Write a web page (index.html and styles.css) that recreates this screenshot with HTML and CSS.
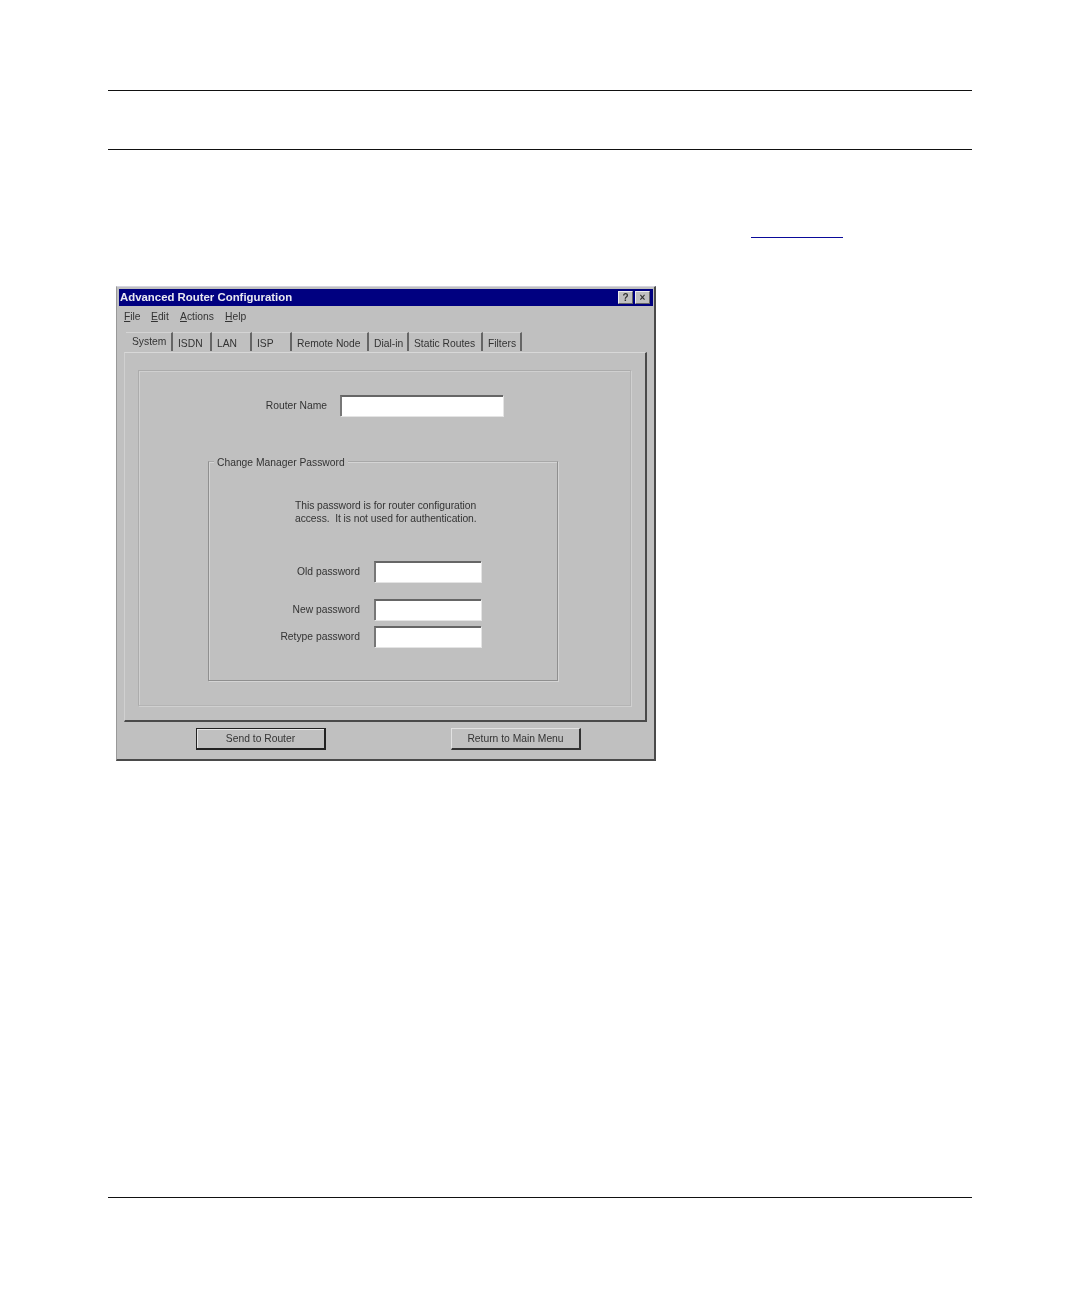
FILE: index.html
```html
<!DOCTYPE html>
<html lang="en">
<head>
<meta charset="utf-8">
<title>Advanced Router Configuration</title>
<link rel="stylesheet" href="styles.css">
</head>
<body>
<main class="page">
  <hr class="rule rule-top">
  <hr class="rule rule-second">
  <div class="link-line"><a class="link-mark" href="#"></a></div>
  <section class="dialog">
    <header class="titlebar">
      <span class="title">Advanced Router Configuration</span>
      <span class="winbtn winbtn-help">?</span>
      <span class="winbtn winbtn-close">×</span>
    </header>
    <nav class="menu">
      <span class="menu-item menu-file"><u>F</u>ile</span>
      <span class="menu-item menu-edit"><u>E</u>dit</span>
      <span class="menu-item menu-actions"><u>A</u>ctions</span>
      <span class="menu-item"><u>H</u>elp</span>
    </nav>
    <div class="tabs">
      <span class="tab tab-active">System</span>
      <span class="tab">ISDN</span>
      <span class="tab">LAN</span>
      <span class="tab">ISP</span>
      <span class="tab">Remote Node</span>
      <span class="tab">Dial-in</span>
      <span class="tab">Static Routes</span>
      <span class="tab">Filters</span>
    </div>
    <div class="panel">
      <div class="inner">
        <div class="router-row">
          <label class="router-label">Router Name</label>
          <span class="field field-router"></span>
        </div>
        <div class="group">
          <span class="legend">Change Manager Password</span>
          <p class="note">This password is for router configuration<br>access.&nbsp; It is not used for authentication.</p>
          <div class="pw-row pw-old"><label class="pw-label">Old password</label><span class="field field-pw"></span></div>
          <div class="pw-row pw-new"><label class="pw-label">New password</label><span class="field field-pw"></span></div>
          <div class="pw-row pw-retype"><label class="pw-label">Retype password</label><span class="field field-pw"></span></div>
        </div>
      </div>
    </div>
    <footer class="actions">
      <button class="btn btn-default">Send to Router</button>
      <button class="btn btn-plain">Return to Main Menu</button>
    </footer>
  </section>
  <hr class="rule rule-bottom">
</main>
</body>
</html>
```
FILE: styles.css
```css
* { box-sizing: border-box; }
html, body { margin: 0; padding: 0; background: #fff; }
.page { width: 1080px; height: 1298px; padding: 90px 108px 0; overflow: hidden; }
.rule { display: block; margin: 0; border: 0; height: 1px; background: #111; }
.rule-second { margin-top: 58px; }
.rule-bottom { margin-top: 436px; }
.link-line { height: 88px; padding: 87px 0 0 643px; }
.link-mark { display: block; width: 92px; height: 1px; background: #0a0a9a; }

.dialog {
  width: 540px; height: 475px; margin: 48px 0 0 8px; padding: 2px 0 0 2px;
  background: #c0c0c0; color: #2a2a2a;
  border-top: 1px solid #d4d4e0; border-left: 1px solid #999;
  border-right: 2px solid #4a4a4a; border-bottom: 2px solid #4a4a4a;
  font: 10.3px/13px "Liberation Sans", Arial, sans-serif;
  filter: blur(0.7px);
}
.titlebar {
  height: 17px; margin-right: 1px; display: flex; align-items: center; gap: 2px;
  padding: 0 3px 0 1px; background: #000080;
}
.title { flex: 1; color: #e8e8f0; font-weight: bold; font-size: 11.4px; }
.winbtn {
  width: 15px; height: 13px; background: #c0c0c0; color: #333;
  border: 1px solid; border-color: #eee #666 #666 #eee;
  font: bold 10px/11px "Liberation Sans", Arial, sans-serif; text-align: center;
}
.menu { height: 20px; display: flex; align-items: center; padding-left: 5px; }
.menu-item { color: #333; }
.menu-file { width: 27px; }
.menu-edit { width: 29px; }
.menu-actions { width: 45px; }

.tabs {
  height: 20px; margin: 6px 0 0 7px;
  display: grid; grid-template-columns: 47px 39px 40px 40px 77px 40px 74px 39px; width: 396px;
}
.tab {
  padding: 4px 0 0 5px; color: #333; white-space: nowrap;
  border-right: 2px solid #666; margin-bottom: 1px;
  border-top: 1px solid #d4d4d4;
}
.tab-active { padding-top: 2px; padding-left: 6px; }

.panel {
  width: 523px; height: 370px; margin-left: 5px; padding: 17px 14px 0 13px;
  border-top: 1px solid #d8d8d8; border-left: 1px solid #d0d0d0;
  border-right: 2px solid #4a4a4a; border-bottom: 2px solid #4a4a4a;
}
.inner {
  height: 336px; padding-top: 24px;
  border: 1px solid #acacac; border-right-color: #b4b4b4; border-bottom-color: #b4b4b4;
  box-shadow: 1px 1px 0 #d0d0d0, inset 1px 1px 0 #d0d0d0;
}
.router-row { display: flex; align-items: center; height: 21px; gap: 13px; }
.router-label { width: 188px; text-align: right; color: #333; }
.field {
  display: block; height: 21px; background: #fff;
  border-top: 2px solid #666; border-left: 2px solid #777;
  box-shadow: 1px 1px 0 #e4e4e4;
}
.field-router { width: 163px; }
.group {
  position: relative; width: 350px; height: 220px; margin: 45px 0 0 69px;
  border: 1px solid #8f8f8f; border-top-color: #a8a8a8;
  box-shadow: 1px 1px 0 #d4d4d4, inset 1px 1px 0 #d4d4d4;
}
.legend {
  position: absolute; left: 5px; top: -6px; padding: 0 3px; background: #c0c0c0;
  color: #333; white-space: nowrap;
}
.note { margin: 37px 0 0 86px; color: #333; letter-spacing: -0.05px; white-space: nowrap; }
.pw-row { display: flex; align-items: center; height: 21px; gap: 14px; }
.pw-old { margin-top: 36px; }
.pw-new { margin-top: 17px; }
.pw-retype { margin-top: 6px; }
.pw-label { width: 151px; text-align: right; color: #333; white-space: nowrap; }
.field-pw { width: 107px; }

.actions { display: flex; height: 22px; margin: 6px 0 0 77px; gap: 125px; }
.btn {
  width: 130px; height: 22px; padding: 0; background: #c0c0c0; color: #333;
  font: 10.3px/13px "Liberation Sans", Arial, sans-serif;
}
.btn-default { border: 1px solid #222; border-right-width: 2px; border-bottom-width: 2px; box-shadow: inset 1px 1px 0 #e6e6e6; }
.btn-plain { border: 1px solid; border-color: #e2e2e2 #333 #333 #e2e2e2; border-right-width: 2px; border-bottom-width: 2px; }
```
